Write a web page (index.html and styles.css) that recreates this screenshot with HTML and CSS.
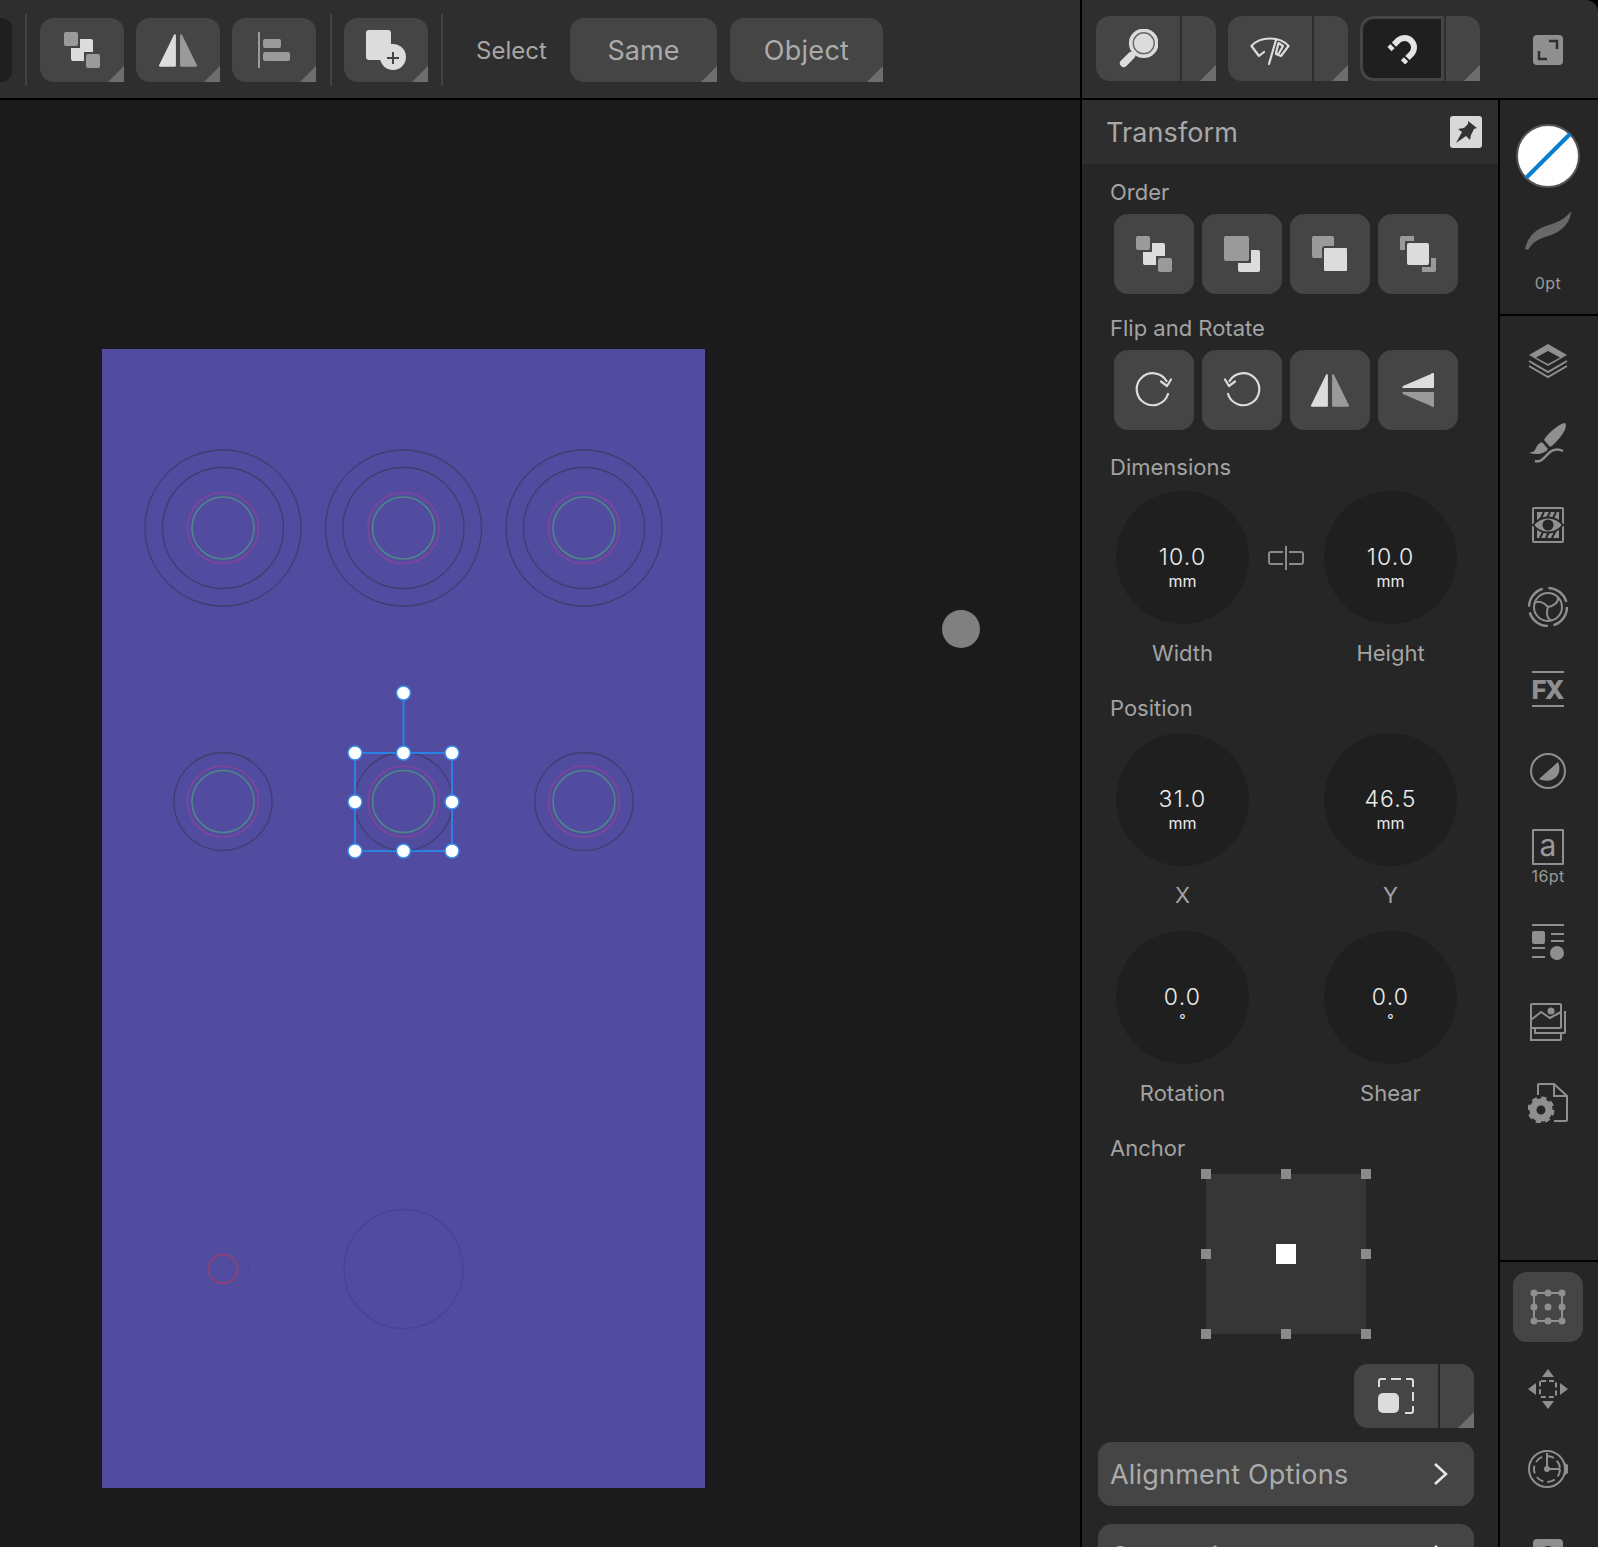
FILE: index.html
```html
<!DOCTYPE html>
<html lang="en">
<head>
    <meta charset="UTF-8">
    <title>Transform</title>
    <link rel="stylesheet" href="styles.css">
</head>

<body>
    <svg class="defs" width="0" height="0">
        <defs>
            <symbol id="i-order" viewBox="0 0 36 36">
                <rect class="mid" x="0" y="0" width="14" height="14" rx="2"/>
                <path class="light" d="M16 7H27a2 2 0 0 1 2 2V20H20V29H9a2 2 0 0 1-2-2V16H16Z"/>
                <rect class="mid" x="22" y="22" width="14" height="14" rx="2"/>
            </symbol>
            <symbol id="i-flip-h" viewBox="0 0 38 34">
                <path class="light" d="M17 2V31a1 1 0 0 1-1 1H2a1 1 0 0 1-1-1.500L15 2a1 1 0 0 1 2 0Z"/>
                <path class="mid" d="M21 2V31a1 1 0 0 0 1 1H36a1 1 0 0 0 1-1.500L23 2a1 1 0 0 0-2 0Z"/>
            </symbol>
        </defs>
    </svg>

    <div class="app">
        <header class="topbar">
            <div class="toolbar">
                <div class="stub"></div>
                <div class="sep"></div>
                <button class="tool more">
                    <svg class="ic36"><use href="#i-order"/></svg>
                </button>
                <button class="tool more">
                    <svg class="ic-flip"><use href="#i-flip-h"/></svg>
                </button>
                <button class="tool more">
                    <svg class="ic-align" viewBox="0 0 32 36">
                        <rect class="mid" x="0" y="0" width="2" height="36"/>
                        <rect class="mid" x="5" y="7" width="18" height="9" rx="2"/>
                        <rect class="mid" x="5" y="20" width="27" height="9" rx="2"/>
                    </svg>
                </button>
                <div class="sep sep-b"></div>
                <button class="tool more">
                    <svg class="ic40" viewBox="0 0 40 40">
                        <rect class="light" x="0" y="0" width="25" height="30" rx="3"/>
                        <circle class="light" cx="27" cy="27" r="13"/>
                        <path class="plus" d="M21 28H33M27 22V34"/>
                    </svg>
                </button>
                <div class="sep sep-c"></div>
                <span class="select-label">Select</span>
                <button class="tool text-btn same more">Same</button>
                <button class="tool text-btn object more">Object</button>
            </div>
            <div class="viewbar">
                <div class="split">
                    <button class="split-main">
                        <svg class="ic40" viewBox="0 0 42 42">
                            <circle class="light" cx="27" cy="15" r="15.500"/>
                            <circle class="ring" cx="27" cy="15" r="11"/>
                            <path class="handle" d="M14 28L6 36"/>
                        </svg>
                    </button>
                    <button class="split-side more"></button>
                </div>
                <div class="split">
                    <button class="split-main">
                        <svg class="ic40" viewBox="0 0 40 32">
                            <path class="line" d="M14 19L9 23L1.500 13C10 3 30 3 38.500 13L31 23L26 21M19 31L26 7M28.500 10L33 13L28.500 21L26 20Z"/>
                        </svg>
                    </button>
                    <button class="split-side more"></button>
                </div>
                <div class="split">
                    <button class="split-main active">
                        <svg class="ic30" viewBox="0 0 30 30">
                            <path class="magnet" d="M7 10.600L11.300 6.300A9.500 9.500 0 0 1 24.700 19.700L20.400 24"/>
                            <path class="magnet" d="M5.500 12.100L2.500 15.100M19 25.400L16 28.400"/>
                        </svg>
                    </button>
                    <button class="split-side more"></button>
                </div>
                <svg class="expand" viewBox="0 0 30 30">
                    <rect class="rail-fill" width="30" height="30" rx="4"/>
                    <path class="expand-arrows" d="M16 6H24V14M6 16V24H14"/>
                </svg>
            </div>
        </header>

        <main class="workspace">
            <section class="canvas">
                <svg class="art" viewBox="0 100 1080 1447">
                    <defs>
                        <g id="target">
                            <circle class="c-magenta" r="35.500"/>
                            <circle class="c-green" r="31"/>
                        </g>
                        <g id="big-target">
                            <circle class="c-dark" r="78"/>
                            <circle class="c-dark" r="60.500"/>
                            <use href="#target"/>
                        </g>
                        <g id="mid-target">
                            <circle class="c-dark" r="49"/>
                            <use href="#target"/>
                        </g>
                    </defs>
                    <rect class="doc" x="102" y="349" width="603" height="1139"/>

                    <use href="#big-target" x="223" y="528"/>
                    <use href="#big-target" x="403.500" y="528"/>
                    <use href="#big-target" x="584" y="528"/>

                    <use href="#mid-target" x="223" y="801.500"/>
                    <use href="#mid-target" x="403.500" y="801.500"/>
                    <use href="#mid-target" x="584" y="801.500"/>

                    <circle class="c-red" cx="223" cy="1269" r="14.300"/>
                    <circle class="c-ghost" cx="223" cy="1269" r="26"/>
                    <circle class="c-faint" cx="403.500" cy="1269" r="59.500"/>

                    <path class="sel" d="M355 753H452V851H355ZM403.500 693V753"/>
                    <g class="sel-handles">
                        <circle cx="403.500" cy="693" r="7"/>
                        <circle cx="355" cy="753" r="7"/>
                        <circle cx="403.500" cy="753" r="7"/>
                        <circle cx="452" cy="753" r="7"/>
                        <circle cx="355" cy="802" r="7"/>
                        <circle cx="452" cy="802" r="7"/>
                        <circle cx="355" cy="851" r="7"/>
                        <circle cx="403.500" cy="851" r="7"/>
                        <circle cx="452" cy="851" r="7"/>
                    </g>
                    <circle class="dot" cx="961" cy="629" r="19"/>
                </svg>
            </section>

            <section class="panel">
                <div class="panel-head">
                    <h2>Transform</h2>
                    <div class="pin">
                        <svg class="ic24" viewBox="0 0 24 24">
                            <path class="pin-shape" d="M14 1L23 8L20 9L17 15L16 20L12 16L2 23L8 12L4 9L10 8L14 4Z"/>
                        </svg>
                    </div>
                </div>

                <div class="panel-body">
                    <h3 class="first">Order</h3>
                    <div class="btn-row">
                        <button class="sq"><svg class="ic36"><use href="#i-order"/></svg></button>
                        <button class="sq">
                            <svg class="ic36" viewBox="0 0 36 36">
                                <rect class="mid" width="25" height="25" rx="2"/>
                                <path class="light" d="M27 14H34a2 2 0 0 1 2 2V34a2 2 0 0 1-2 2H16a2 2 0 0 1-2-2V27H27Z"/>
                            </svg>
                        </button>
                        <button class="sq">
                            <svg class="ic36" viewBox="0 0 36 36">
                                <rect class="mid" width="22" height="22" rx="2"/>
                                <rect class="light gap" x="11" y="11" width="25" height="25" rx="2"/>
                            </svg>
                        </button>
                        <button class="sq">
                            <svg class="ic36" viewBox="0 0 36 36">
                                <path class="mid" d="M2 0H14V5H5V14H0V2a2 2 0 0 1 2-2Z"/>
                                <rect class="light" x="7" y="7" width="22" height="22" rx="2"/>
                                <path class="mid" d="M36 22V34a2 2 0 0 1-2 2H22V31H31V22Z"/>
                            </svg>
                        </button>
                    </div>

                    <h3 class="flip">Flip and Rotate</h3>
                    <div class="btn-row">
                        <button class="sq">
                            <svg class="ic38" viewBox="0 0 38 38">
                                <path class="line" d="M33 23A16 16 0 1 1 31.500 10"/>
                                <path class="line" d="M26 10.500L32 15L36 8.500"/>
                            </svg>
                        </button>
                        <button class="sq">
                            <svg class="ic38 mirror" viewBox="0 0 38 38">
                                <path class="line" d="M33 23A16 16 0 1 1 31.500 10"/>
                                <path class="line" d="M26 10.500L32 15L36 8.500"/>
                            </svg>
                        </button>
                        <button class="sq"><svg class="ic-flip"><use href="#i-flip-h"/></svg></button>
                        <button class="sq">
                            <svg class="ic38" viewBox="0 0 34 38">
                                <path class="light" d="M32 17H3a1 1 0 0 1-1-2L30 3a1.500 1.500 0 0 1 3 1V16a1 1 0 0 1-1 1Z"/>
                                <path class="mid" d="M32 21H3a1 1 0 0 0-1 2L30 35a1.500 1.500 0 0 0 3-1V22a1 1 0 0 0-1-1Z"/>
                            </svg>
                        </button>
                    </div>

                    <h3 class="dims">Dimensions</h3>
                    <div class="fields">
                        <div class="field">
                            <div class="dial"><span class="val">10.0</span><span class="unit">mm</span></div>
                            <span class="cap">Width</span>
                        </div>
                        <svg class="link" viewBox="0 0 36 24">
                            <path class="line-mid" d="M15 6H3a2 2 0 0 0-2 2V16a2 2 0 0 0 2 2H15M21 6H33a2 2 0 0 1 2 2V16a2 2 0 0 1-2 2H21M18 0V24"/>
                        </svg>
                        <div class="field">
                            <div class="dial"><span class="val">10.0</span><span class="unit">mm</span></div>
                            <span class="cap">Height</span>
                        </div>
                    </div>

                    <h3 class="pos">Position</h3>
                    <div class="fields">
                        <div class="field">
                            <div class="dial"><span class="val">31.0</span><span class="unit">mm</span></div>
                            <span class="cap">X</span>
                        </div>
                        <div class="spacer"></div>
                        <div class="field">
                            <div class="dial"><span class="val">46.5</span><span class="unit">mm</span></div>
                            <span class="cap">Y</span>
                        </div>
                        <div class="field">
                            <div class="dial"><span class="val">0.0</span><span class="unit deg">°</span></div>
                            <span class="cap">Rotation</span>
                        </div>
                        <div class="spacer"></div>
                        <div class="field">
                            <div class="dial"><span class="val">0.0</span><span class="unit deg">°</span></div>
                            <span class="cap">Shear</span>
                        </div>
                    </div>

                    <h3 class="anchor-label">Anchor</h3>
                    <div class="anchor">
                        <i class="h h-tl"></i><i class="h h-tc"></i><i class="h h-tr"></i>
                        <i class="h h-ml"></i><i class="h-center"></i><i class="h h-mr"></i>
                        <i class="h h-bl"></i><i class="h h-bc"></i><i class="h h-br"></i>
                    </div>

                    <div class="split small">
                        <button class="split-main">
                            <svg class="ic36" viewBox="0 0 36 36">
                                <path class="line light-line" d="M1 9V3a2 2 0 0 1 2-2H8M13 1H23M28 1H33a2 2 0 0 1 2 2V9M35 14V23M35 28V33a2 2 0 0 1-2 2H27"/>
                                <rect class="light" x="0" y="15" width="21" height="20" rx="5"/>
                            </svg>
                        </button>
                        <button class="split-side more"></button>
                    </div>

                    <button class="row-btn">
                        <span>Alignment Options</span>
                        <svg class="chev" viewBox="0 0 14 24"><path class="line-white" d="M1 2L12 12L1 22"/></svg>
                    </button>
                    <button class="row-btn next">
                        <span>Constraints</span>
                        <svg class="chev" viewBox="0 0 14 24"><path class="line-white" d="M1 2L12 12L1 22"/></svg>
                    </button>
                </div>
            </section>

            <aside class="rail">
                <div class="rail-top">
                    <div class="swatch">
                        <svg viewBox="0 0 60 60"><path class="slash" d="M8 52L52 8"/></svg>
                    </div>
                    <svg class="pressure" viewBox="0 0 46 40">
                        <path d="M0 38C4 22 14 17 24 14C34 11 41 7 46 0C46 10 38 20 26 24C16 27 8 30 3 39Z"/>
                    </svg>
                    <span class="rail-text">0pt</span>
                </div>

                <div class="rail-mid">
                    <div class="rail-cell">
                        <svg class="ic40" viewBox="0 0 40 36">
                            <path class="r-fill" d="M20 1L39 12L20 23L1 12Z"/>
                            <path class="r-dark" d="M20 8L32 14.500L20 21L8 14.500Z"/>
                            <path class="r-line" d="M1 18L20 29L39 18M1 23L20 34L39 23"/>
                        </svg>
                    </div>
                    <div class="rail-cell">
                        <svg class="ic40" viewBox="0 0 38 40">
                            <path class="r-fill" d="M36 0C39 3 34 12 27 19C25 21 23 23 21 24L15 17C17 13 21 9 25 6C29 3 33 0 36 0Z"/>
                            <path class="r-fill" d="M13 19L19 26C16 31 8 32 0 30C5 29 6 27 7 25C8 22 10 20 13 19Z"/>
                            <path class="r-line r-thick" d="M6 38C13 40 17 32 21 29C25 26 30 26 34 28"/>
                        </svg>
                    </div>
                    <div class="rail-cell">
                        <svg class="ic36" viewBox="0 0 32 36">
                            <rect class="r-line" x="1" y="1" width="30" height="34" rx="1"/>
                            <path class="r-fill" d="M5 5H27V13H5ZM5 23H27V31H5Z"/>
                            <path class="r-hatch" d="M8 13L12 5M14 13L18 5M20 13L24 5M8 31L12 23M14 31L18 23M20 31L24 23"/>
                            <path class="r-fill r-eye" d="M1 18C9 8 23 8 31 18C23 28 9 28 1 18Z"/>
                            <circle class="r-dark" cx="16" cy="18" r="5.500"/>
                        </svg>
                    </div>
                    <div class="rail-cell">
                        <svg class="ic40" viewBox="0 0 40 40">
                            <circle class="r-line dash-ring" cx="20" cy="20" r="19"/>
                            <circle class="r-line" cx="20" cy="20" r="14"/>
                            <path class="r-line" d="M20 20C26 19 31 15 30 10"/>
                            <path class="r-line" d="M20 20C26 19 31 15 30 10" transform="rotate(120 20 20)"/>
                            <path class="r-line" d="M20 20C26 19 31 15 30 10" transform="rotate(240 20 20)"/>
                        </svg>
                    </div>
                    <div class="rail-cell">
                        <svg class="ic36" viewBox="0 0 32 36">
                            <path class="r-line" d="M0 1H32M0 35H32"/>
                            <text class="fx" x="15" y="28">FX</text>
                        </svg>
                    </div>
                    <div class="rail-cell">
                        <svg class="ic36" viewBox="0 0 36 36">
                            <circle class="r-line" cx="18" cy="18" r="17"/>
                            <path class="r-fill" d="M9 26L28 9C31 16 29 22 25 25C20 29 14 28 9 26Z"/>
                        </svg>
                    </div>
                    <div class="rail-cell font-cell">
                        <div class="a-box">a</div>
                        <span class="rail-text">16pt</span>
                    </div>
                    <div class="rail-cell tight">
                        <svg class="ic36" viewBox="0 0 32 36">
                            <path class="r-line" d="M0 1H32M19 10H32M19 17H32M0 24H13M0 33H13"/>
                            <rect class="r-fill" x="0" y="7" width="13" height="13" rx="2"/>
                            <circle class="r-fill" cx="25" cy="29" r="7"/>
                        </svg>
                    </div>
                    <div class="rail-cell tight">
                        <svg class="ic38" viewBox="0 0 36 38">
                            <rect class="r-line" x="1" y="1" width="30" height="24" rx="1"/>
                            <path class="r-line" d="M1 17L11 9L20 15L31 9"/>
                            <circle class="r-fill" cx="21" cy="8" r="3.500"/>
                            <path class="r-line" d="M35 8V29a1 1 0 0 1-1 1H5V25M31 30V36a1 1 0 0 1-1 1H1V25"/>
                        </svg>
                    </div>
                    <div class="rail-cell">
                        <svg class="ic40" viewBox="0 0 40 40">
                            <path class="r-line" d="M10 12V2a1 1 0 0 1 1-1H26L39 13V37a1 1 0 0 1-1 1H26M26 1V13H39"/>
                            <circle class="gear-ring" cx="13" cy="27" r="8"/>
                            <circle class="gear-teeth" cx="13" cy="27" r="11.500"/>
                        </svg>
                    </div>
                </div>

                <div class="rail-bottom">
                    <div class="rail-cell active-cell">
                        <svg class="ic36" viewBox="0 0 36 36">
                            <rect class="r-line" x="4" y="4" width="28" height="28"/>
                            <g class="r-fill">
                                <circle cx="4" cy="4" r="3.500"/><circle cx="18" cy="4" r="3.500"/><circle cx="32" cy="4" r="3.500"/>
                                <circle cx="4" cy="18" r="3.500"/><circle cx="18" cy="18" r="3.500"/><circle cx="32" cy="18" r="3.500"/>
                                <circle cx="4" cy="32" r="3.500"/><circle cx="18" cy="32" r="3.500"/><circle cx="32" cy="32" r="3.500"/>
                            </g>
                        </svg>
                    </div>
                    <div class="rail-cell move-cell">
                        <svg class="ic40" viewBox="0 0 40 40">
                            <path class="r-fill" d="M20 0L26 8H14ZM20 40L26 32H14ZM0 20L8 14V26ZM40 20L32 14V26Z"/>
                            <rect class="r-line r-dash" x="12" y="12" width="16" height="16" rx="1"/>
                        </svg>
                    </div>
                    <div class="rail-cell clock-cell">
                        <svg class="ic40" viewBox="0 0 40 38">
                            <circle class="r-line" cx="19" cy="19" r="18"/>
                            <circle class="r-line r-dash2" cx="19" cy="19" r="13"/>
                            <path class="r-line" d="M19 3V19H32"/>
                            <circle class="r-fill" cx="19" cy="19" r="3"/>
                            <path class="r-fill" d="M37 13L40 15V23L37 25Z"/>
                        </svg>
                    </div>
                    <svg class="rail-last" viewBox="0 0 30 30">
                        <rect class="r-fill" width="30" height="30" rx="4"/>
                        <circle class="r-dark" cx="15" cy="15" r="8"/>
                    </svg>
                </div>
            </aside>
        </main>
    </div>
</body>
</html>
```

FILE: styles.css
```css
*{
    box-sizing: border-box;
    font-family: "Inter", "Liberation Sans", sans-serif;
}
html, body{
    margin: 0;
    height: 100%;
    overflow: hidden;
    background: #000;
}
button{
    border: 0;
    padding: 0;
    margin: 0;
}
svg{
    display: block;
    flex: none;
}
.defs{
    position: absolute;
}
.app{
    width: 1598px;
    height: 1547px;
    overflow: hidden;
    display: flex;
    flex-direction: column;
}

/* icon sizes */
.ic24{ width: 24px; height: 24px; }
.ic30{ width: 30px; height: 30px; }
.ic36{ width: 36px; height: 36px; }
.ic38{ width: 38px; height: 38px; }
.ic40{ width: 40px; height: 40px; }
.ic-flip{ width: 40px; height: 36px; margin-top: 2px; }
.ic-align{ width: 32px; height: 36px; }
.mirror{ transform: scaleX(-1); }

/* icon paints */
.light{ fill: #dcdcdc; }
.mid{ fill: #9a9a9a; }
.gap{ stroke: #454545; stroke-width: 2; }
.plus{ fill: none; stroke: #454545; stroke-width: 2; }
.ring{ fill: none; stroke: #6a6a6a; stroke-width: 1.5; }
.handle{ fill: none; stroke: #dcdcdc; stroke-width: 8; stroke-linecap: round; }
.line{ fill: none; stroke: #dcdcdc; stroke-width: 2.2; stroke-linecap: round; stroke-linejoin: round; }
.light-line{ stroke-width: 2; stroke-linecap: butt; }
.line-mid{ fill: none; stroke: #8a8a8a; stroke-width: 2; }
.line-white{ fill: none; stroke: #e8e8e8; stroke-width: 2.5; }
.magnet{ fill: none; stroke: #e4e4e4; stroke-width: 6; }
.rail-fill{ fill: #8f8f8f; }
.expand-arrows{ fill: none; stroke: #2e2e2e; stroke-width: 2.5; }
.r-fill{ fill: #8f8f8f; }
.r-dark{ fill: #262626; }
.r-line{ fill: none; stroke: #8f8f8f; stroke-width: 2; }
.r-thick{ stroke-width: 2.5; }
.r-hatch{ fill: none; stroke: #262626; stroke-width: 2; }
.r-eye{ stroke: #262626; stroke-width: 2; }
.r-dash{ stroke-dasharray: 5 3; }
.r-dash2{ stroke-dasharray: 8 4; }
.dash-ring{ stroke-width: 2.500; stroke-dasharray: 24 5.800; }
.gear-ring{ fill: #262626; stroke: #8f8f8f; stroke-width: 7; }
.gear-teeth{ fill: none; stroke: #8f8f8f; stroke-width: 4; stroke-dasharray: 5 4; }
.fx{
    fill: #8f8f8f;
    font-size: 26px;
    font-weight: 800;
    text-anchor: middle;
    letter-spacing: -2px;
}

/* top bar */
.topbar{
    height: 100px;
    flex: none;
    display: flex;
    background: #2e2e2e;
    border-bottom: 2px solid #000;
    border-top-right-radius: 12px;
}
.toolbar{
    width: 1082px;
    flex: none;
    display: flex;
    align-items: flex-start;
    padding-top: 18px;
    border-right: 2px solid #000;
}
.stub{
    width: 12px;
    height: 64px;
    background: #1f1f1f;
    border-radius: 0 10px 10px 0;
}
.sep{
    width: 2px;
    height: 72px;
    margin: -4px 13px 0;
    background: #444;
}
.sep-b{ margin-left: 2px; margin-right: 12px; }
.sep-c{ margin-right: 12px; }
.tool{
    position: relative;
    width: 84px;
    height: 64px;
    margin-right: 12px;
    display: flex;
    align-items: center;
    justify-content: center;
    background: #454545;
    border-radius: 14px 14px 0 14px;
}
.sep-b + .tool{
    margin-right: 0;
}
.more::after{
    content: "";
    position: absolute;
    right: 0;
    bottom: 0;
    width: 16px;
    height: 16px;
    background: #6e6e6e;
    clip-path: polygon(100% 0, 100% 100%, 0 100%);
}
.select-label{
    margin: 19px 0 0 21px;
    width: 94px;
    font-size: 24px;
    line-height: 28px;
    color: #a6a6a6;
}
.text-btn{
    font-size: 27px;
    color: #ababab;
}
.same{ width: 147px; margin-right: 13px; }
.object{ width: 153px; letter-spacing: 0.3px; }

.viewbar{
    flex: 1;
    display: flex;
    gap: 12px;
    padding: 16px 0 0 14px;
}
.split{
    display: flex;
    gap: 2px;
    height: 65px;
    width: 120px;
}
.split-main{
    width: 84px;
    display: flex;
    align-items: center;
    justify-content: center;
    background: #454545;
    border-radius: 14px 0 0 14px;
}
.split-side{
    position: relative;
    flex: 1;
    background: #454545;
    border-radius: 0 14px 0 0;
}
.split-main.active{
    background: #1f1f1f;
    border: 3px solid #454545;
}
.expand{
    width: 30px;
    height: 30px;
    margin: 19px 0 0 41px;
}

/* workspace */
.workspace{
    flex: 1;
    min-height: 0;
    display: flex;
}
.canvas{
    width: 1082px;
    flex: none;
    background: #1b1b1b;
    border-right: 2px solid #000;
}
.art{
    width: 1080px;
    height: 1447px;
}
.doc{ fill: #514c9f; }
.art circle{ fill: none; }
.c-dark{ stroke: #423c70; stroke-width: 1.300; }
.c-magenta{ stroke: #80459a; stroke-width: 1.600; }
.c-green{ stroke: #4f8688; stroke-width: 1.600; }
.c-red{ stroke: #95406c; stroke-width: 1.500; }
.c-faint{ stroke: #474399; stroke-width: 1.300; }
.c-ghost{ stroke: #4b4a9d; stroke-width: 1; }
.sel{ fill: none; stroke: #2b80e2; stroke-width: 2; }
.art .sel-handles circle{ fill: #fff; stroke: #3a8ce6; stroke-width: 1.500; }
.art .dot{ fill: #808080; }

/* transform panel */
.panel{
    width: 416px;
    flex: none;
    background: #262626;
}
.panel-head{
    height: 64px;
    display: flex;
    align-items: center;
    justify-content: space-between;
    padding: 0 16px 0 24px;
    background: #2e2e2e;
}
.panel-head h2{
    margin: 0;
    font-size: 27px;
    font-weight: 400;
    color: #a8a8a8;
    letter-spacing: 0.1px;
}
.pin{
    width: 32px;
    height: 32px;
    display: flex;
    align-items: center;
    justify-content: center;
    background: #d8d8d8;
    border-radius: 3px;
}
.pin-shape{ fill: #333; }
.panel-body{
    padding: 0 24px 0 16px;
}
.panel-body h3{
    margin: 0;
    padding-left: 12px;
    font-size: 22px;
    line-height: 28px;
    font-weight: 400;
    color: #a3a3a3;
}
.panel-body h3.first{ margin-top: 14px; margin-bottom: 8px; }
.panel-body h3.flip{ margin-top: 20px; margin-bottom: 8px; }
.panel-body h3.dims{ margin-top: 23px; margin-bottom: 10px; }
.panel-body h3.pos{ margin-top: 27px; margin-bottom: 11px; }
.panel-body h3.anchor-label{ margin-top: 27px; margin-bottom: 12px; }
.btn-row{
    display: flex;
    gap: 8px;
    padding-left: 16px;
}
.sq{
    width: 80px;
    height: 80px;
    display: flex;
    align-items: center;
    justify-content: center;
    background: #454545;
    border-radius: 14px;
}
.fields{
    display: grid;
    grid-template-columns: 133px 75px 133px;
    row-gap: 22px;
    padding-left: 18px;
}
.spacer{ width: 75px; }
.link{
    width: 36px;
    height: 24px;
    margin: 55px 0 0 19px;
}
.field{
    display: flex;
    flex-direction: column;
    align-items: center;
}
.dial{
    width: 133px;
    height: 133px;
    padding-top: 53px;
    display: flex;
    flex-direction: column;
    align-items: center;
    border-radius: 50%;
    background: #1f1f1f;
    color: #ececec;
}
.val{
    font-size: 23px;
    line-height: 26px;
    font-weight: 300;
    letter-spacing: 1.200px;
}
.unit{
    margin-top: 1px;
    font-size: 16px;
    line-height: 20px;
}
.unit.deg{
    margin-top: 0;
    font-size: 14px;
}
.cap{
    margin-top: 15px;
    font-size: 22px;
    line-height: 28px;
    color: #a3a3a3;
}
.anchor{
    position: relative;
    width: 160px;
    height: 160px;
    margin-left: 108px;
    background: #363636;
}
.h{
    position: absolute;
    width: 10px;
    height: 10px;
    background: #8a8a8a;
}
.h-tl, .h-tc, .h-tr{ top: -5px; }
.h-ml, .h-mr{ top: 75px; }
.h-bl, .h-bc, .h-br{ bottom: -5px; }
.h-tl, .h-ml, .h-bl{ left: -5px; }
.h-tc, .h-bc{ left: 75px; }
.h-tr, .h-mr, .h-br{ right: -5px; }
.h-center{
    position: absolute;
    left: 70px;
    top: 70px;
    width: 20px;
    height: 20px;
    background: #fff;
}
.split.small{
    width: 120px;
    height: 64px;
    margin: 30px 0 0 256px;
}
.row-btn{
    width: 376px;
    height: 64px;
    margin-top: 14px;
    padding: 0 26px 0 12px;
    display: flex;
    align-items: center;
    justify-content: space-between;
    background: #454545;
    border-radius: 14px;
    font-size: 27px;
    letter-spacing: 0.2px;
    color: #ababab;
}
.row-btn.next{ margin-top: 18px; }
.chev{
    width: 14px;
    height: 24px;
}

/* right rail */
.rail{
    flex: 1;
    display: flex;
    flex-direction: column;
    background: #262626;
    border-left: 2px solid #000;
    padding-right: 2px;
    color: #8f8f8f;
}
.rail-top{
    height: 216px;
    flex: none;
    display: flex;
    flex-direction: column;
    align-items: center;
    padding-top: 24px;
    margin-right: -2px;
    padding-right: 2px;
    border-bottom: 2px solid #000;
}
.swatch{
    width: 64px;
    height: 64px;
    border-radius: 50%;
    background: #fff;
    border: 2px solid #555;
}
.slash{ stroke: #0a7fd0; stroke-width: 4; }
.pressure{
    width: 46px;
    height: 40px;
    margin-top: 23px;
    fill: #686868;
}
.rail-text{
    margin-top: 23px;
    font-size: 16px;
    line-height: 18px;
    letter-spacing: 0.4px;
    color: #9a9a9a;
}
.rail-mid{
    height: 946px;
    flex: none;
    padding-top: 4px;
    margin-right: -2px;
    padding-right: 2px;
    border-bottom: 2px solid #000;
}
.rail-cell{
    height: 82px;
    display: flex;
    flex-direction: column;
    align-items: center;
    justify-content: center;
}
.rail-cell.tight{
    height: 80px;
}
.font-cell{
    height: 90px;
}
.a-box{
    width: 32px;
    height: 36px;
    border: 2px solid #8f8f8f;
    border-radius: 1px;
    text-align: center;
    font-size: 30px;
    line-height: 28px;
    color: #9a9a9a;
}
.font-cell .rail-text{
    margin-top: 2px;
}
.rail-bottom{
    flex: 1;
    padding-top: 10px;
}
.active-cell{
    width: 70px;
    height: 70px;
    margin-left: 13px;
    background: #454545;
    border-radius: 14px;
}
.move-cell{
    height: 80px;
    margin-top: 7px;
}
.clock-cell{
    height: 80px;
}
.rail-last{
    width: 30px;
    height: 30px;
    margin: 30px 0 0 33px;
}
```
